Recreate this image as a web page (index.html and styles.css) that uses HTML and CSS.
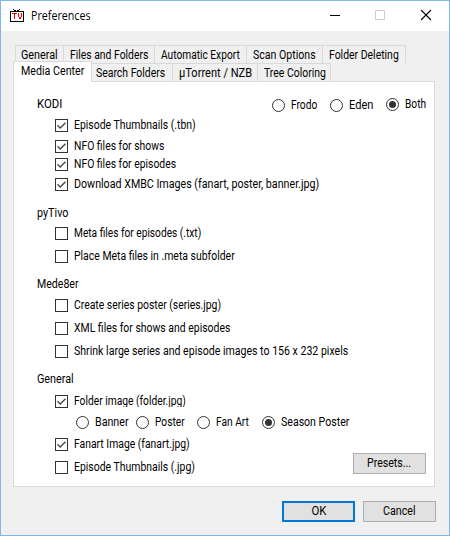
FILE: index.html
```html
<!DOCTYPE html>
<html lang="en">
<head>
<meta charset="utf-8">
<title>Preferences</title>
<link rel="stylesheet" href="styles.css">
</head>
<body>
<svg width="0" height="0" class="defs"><symbol id="tick" viewBox="0 0 11 11"><path d="M1.5 5.3l2.7 2.7 5.3-5.3" fill="none" stroke="#444" stroke-width="1.3"/></symbol></svg>
<div class="window">
  <header class="titlebar">
    <svg class="logo" width="14" height="13" viewBox="0 0 14 13" shape-rendering="crispEdges">
      <path d="M.5 2.5h13v10h-13z" fill="#fff" stroke="#000"/>
      <path d="M3 0h1v1h-1zM4 1h2v1h-2zM9 0h1v1h-1zM7 1h2v1h-2z" fill="#000"/>
      <path d="M2 4h5v1h-5zM4 5h1v5h-1zM8 4h1v4h-1zM11 4h1v4h-1zM9 8h2v2h-2z" fill="#f00"/>
    </svg>
    <h1><span class="s89">Preferences</span></h1>
    <svg class="controls" width="102" height="12" viewBox="0 0 102 12" fill="none">
      <path d="M0 6.5h10" stroke="#000"/>
      <path d="M45.5 1.5h9v9h-9z" stroke="#ccc"/>
      <path d="M91 1l10 10M101 1l-10 10" stroke="#000" stroke-width="1.1"/>
    </svg>
  </header>
  <nav class="tabs back">
    <div class="w49"><span class="s90">General</span></div>
    <div class="w91"><span class="s865">Files and Folders</span></div>
    <div class="w92"><span class="s85">Automatic Export</span></div>
    <div class="w76"><span class="s88">Scan Options</span></div>
    <div class="w83"><span class="s87">Folder Deleting</span></div>
  </nav>
  <nav class="tabs front">
    <div class="active"><span class="s89">Media Center</span></div>
    <div class="w81"><span class="s87">Search Folders</span></div>
    <div class="w85"><span class="s92">µTorrent / NZB</span></div>
    <div class="w73"><span class="s87">Tree Coloring</span></div>
  </nav>
  <main class="panel">
    <div class="headrow">
      <h2><span class="s95">KODI</span></h2>
      <div class="versions">
        <label class="radio"><i></i><span class="s85">Frodo</span></label>
        <label class="radio"><i></i><span class="s92">Eden</span></label>
        <label class="radio on raised"><i></i><span class="s85">Both</span></label>
      </div>
    </div>
    <label class="check g3"><i><svg><use href="#tick"/></svg></i><span class="s87">Episode Thumbnails (.tbn)</span></label>
    <label class="check g4"><i><svg><use href="#tick"/></svg></i><span class="s865">NFO files for shows</span></label>
    <label class="check g1"><i><svg><use href="#tick"/></svg></i><span class="s865">NFO files for episodes</span></label>
    <label class="check g3"><i><svg><use href="#tick"/></svg></i><span class="s89">Download XMBC Images (fanart, poster, banner.jpg)</span></label>
    <h2 class="g12"><span class="s90">pyTivo</span></h2>
    <label class="check g3"><i></i><span class="s85">Meta files for episodes (.txt)</span></label>
    <label class="check g6"><i></i><span class="s87">Place Meta files in .meta subfolder</span></label>
    <h2 class="g11"><span class="s88">Mede8er</span></h2>
    <label class="check g4"><i></i><span class="s865">Create series poster (series.jpg)</span></label>
    <label class="check g6"><i></i><span class="s87">XML files for shows and episodes</span></label>
    <label class="check g6"><i></i><span class="s88">Shrink large series and episode images to 156 x 232 pixels</span></label>
    <h2 class="g11"><span class="s90">General</span></h2>
    <label class="check g5"><i><svg><use href="#tick"/></svg></i><span class="s855 cut">Folder image (folder.jpg)</span></label>
    <div class="art">
      <label class="radio"><i></i><span class="s89">Banner</span></label>
      <label class="radio"><i></i><span class="s85">Poster</span></label>
      <label class="radio"><i></i><span class="s85">Fan Art</span></label>
      <label class="radio on"><i></i><span class="s88">Season Poster</span></label>
    </div>
    <div class="last">
      <div>
        <label class="check"><i><svg><use href="#tick"/></svg></i><span class="s865">Fanart Image (fanart.jpg)</span></label>
        <label class="check g6"><i></i><span class="s87">Episode Thumbnails (.jpg)</span></label>
      </div>
      <button class="presets"><span class="s88">Presets...</span></button>
    </div>
  </main>
  <footer>
    <button class="default"><span class="s95">OK</span></button>
    <button><span class="s89">Cancel</span></button>
  </footer>
</div>
</body>
</html>
```

FILE: styles.css
```css
* { box-sizing: border-box; }
body { margin: 0; }
h1, h2 { margin: 0; font-weight: 400; }
.defs { position: absolute; }

.window {
  width: 450px;
  height: 536px;
  border: 1px solid #7eb6f1;
  background: #f0f0f0;
  color: #000;
  font: 12px/17px Roboto, "Liberation Sans", sans-serif;
  white-space: nowrap;
}

/* condensed label widths */
span { display: inline-block; transform-origin: 0 50%; }
.s85 { transform: scaleX(.848); }
.s855 { transform: scaleX(.855); }
.s865 { transform: scaleX(.865); }
.s87 { transform: scaleX(.87); }
.s88 { transform: scaleX(.881); }
.s89 { transform: scaleX(.89); }
.s90 { transform: scaleX(.9); }
.s92 { transform: scaleX(.922); }
.s95 { transform: scaleX(.95); }

.titlebar {
  display: flex;
  height: 30px;
  padding-left: 9px;
  background: #fff;
}
.logo { margin-top: 8px; }
h1 {
  margin: 6px 0 0 7px;
  width: 74px;
  font: 12px/18px "Open Sans", "Noto Sans", sans-serif;
}
.controls { margin: 8px 0 0 225px; }

.tabs { display: flex; }
.tabs div {
  height: 18px;
  padding-left: 6px;
  border: solid #d9d9d9;
  border-width: 1px 1px 0 0;
  line-height: 18px;
}
.back { margin: 14px 0 0 14px; height: 18px; }
.back div:first-child { border-left-width: 1px; padding-left: 5px; }
.front { margin-left: 12px; height: 18px; }
.front .active {
  position: relative;
  width: 79px;
  height: 21px;
  margin-top: -2px;
  padding-left: 7px;
  border-left-width: 1px;
  background: #fff;
}
.w49 { width: 49px; }
.w91 { width: 91px; }
.w92 { width: 92px; }
.w76 { width: 76px; }
.w83 { width: 83px; }
.front .w81 { width: 81px; padding-left: 4px; }
.w85 { width: 85px; }
.w73 { width: 73px; }

.panel {
  width: 422px;
  height: 406px;
  margin-left: 12px;
  padding: 14px 8px 0 23px;
  border: 1px solid #d9d9d9;
  background: #fff;
}
.headrow { display: flex; justify-content: space-between; }
h2 { font-size: 12px; line-height: 17px; height: 17px; }

.check, .radio { display: flex; height: 17px; align-items: center; }
.check { padding-left: 18px; }
.check i, .radio i {
  flex: none;
  position: relative;
  width: 13px;
  height: 13px;
  margin-right: 6px;
  border: 1px solid #333;
  background: #fff;
}
.check svg { display: block; width: 11px; height: 11px; }
.radio i { border-radius: 50%; }
.radio.on i::after {
  content: "";
  position: absolute;
  inset: 2px;
  border-radius: 50%;
  background: #333;
}
.versions { display: flex; width: 154px; margin-top: 1px; }
.versions .radio { flex: none; }
.versions .radio:nth-child(1) { width: 58px; }
.versions .radio:nth-child(2) { width: 56px; }
.raised { margin-top: -1px; }

.g1 { margin-top: 1px; }
.g3 { margin-top: 3px; }
.g4 { margin-top: 4px; }
.g5 { margin-top: 5px; }
.g6 { margin-top: 6px; }
.g11 { margin-top: 11px; }
.g12 { margin-top: 12px; }
.cut { clip-path: inset(0 0 3px 0); }

.art { display: flex; margin: 4px 0 0 39px; }
.art .radio:nth-child(1) { width: 60px; }
.art .radio:nth-child(2) { width: 61px; }
.art .radio:nth-child(3) { width: 65px; }

.last { display: flex; justify-content: space-between; margin-top: 5px; }
button {
  width: 73px;
  height: 21px;
  padding: 0;
  border: 1px solid #adadad;
  background: #e1e1e1;
  color: #000;
  font: inherit;
}
button span { transform-origin: 50% 50%; }
.presets { margin-top: 17px; }
footer { display: flex; gap: 8px; margin: 14px 0 0 281px; }
.default { border: 2px solid #0078d7; }
```
